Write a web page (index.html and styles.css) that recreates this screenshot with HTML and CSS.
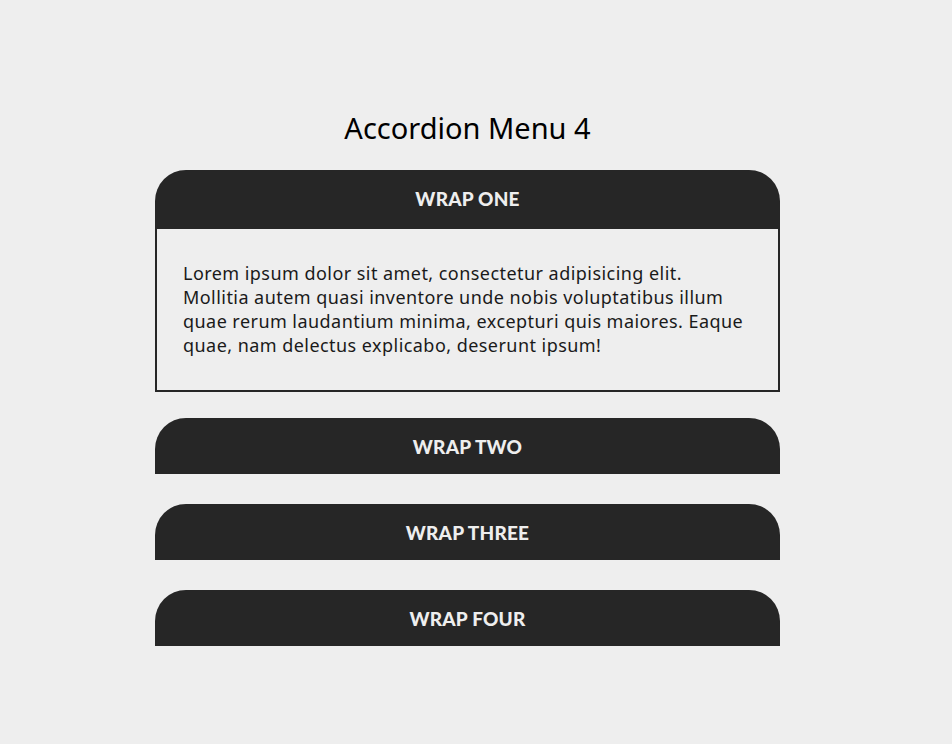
FILE: index.html
```html
<!DOCTYPE html>
<html lang="en">
<head>
<meta charset="utf-8">
<title>Accordion Menu 4</title>
<link rel="stylesheet" href="styles.css">
</head>
<body>
<main class="page">
  <h1 class="title">Accordion Menu 4</h1>
  <div class="accordion">
    <section class="wrap open">
      <div class="wrap-head">WRAP ONE</div>
      <div class="wrap-body">
        <p>Lorem ipsum dolor sit amet, consectetur adipisicing elit. Mollitia autem quasi inventore unde nobis voluptatibus illum quae rerum laudantium minima, excepturi quis maiores. Eaque quae, nam delectus explicabo, deserunt ipsum!</p>
      </div>
    </section>
    <section class="wrap">
      <div class="wrap-head">WRAP TWO</div>
    </section>
    <section class="wrap">
      <div class="wrap-head">WRAP THREE</div>
    </section>
    <section class="wrap">
      <div class="wrap-head">WRAP FOUR</div>
    </section>
  </div>
</main>
</body>
</html>
```
FILE: styles.css
```css
html, body {
  margin: 0;
  padding: 0;
  background: #eeeeee;
}
body {
  padding-right: 17px;
  font-family: "Noto Sans", "Open Sans", sans-serif;
  color: #1a1a1a;
}
.page {
  width: 625px;
  margin: 0 auto;
  padding-top: 108px;
}
.title {
  margin: 0 0 22px;
  text-align: center;
  font-size: 29px;
  font-weight: 400;
  line-height: 40px;
  color: #000;
}
.accordion {
  display: flex;
  flex-direction: column;
  gap: 30px;
}
.wrap-head {
  height: 56px;
  display: flex;
  align-items: center;
  justify-content: center;
  background: #262626;
  color: #eeeeee;
  border-radius: 31px 31px 0 0;
  font-family: "Lato", sans-serif;
  font-weight: 900;
  font-size: 19px;
  letter-spacing: 0.2px;
}
.open .wrap-head {
  height: 57px;
}
.open {
  margin-bottom: -4px;
}
.wrap-body {
  border: 2px solid #262626;
  padding: 32px 26px 33px;
}
.wrap-body p {
  margin: 0;
  font-size: 18px;
  line-height: 24px;
  letter-spacing: 0.45px;
}
```
